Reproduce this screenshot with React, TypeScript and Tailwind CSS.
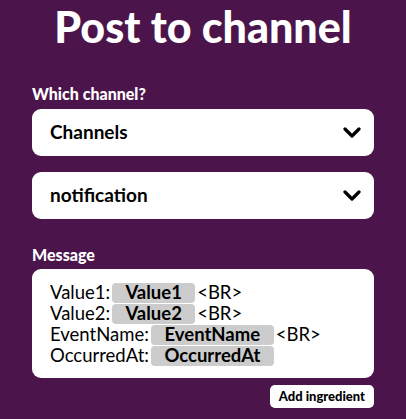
const font = { fontFamily: '"Lato", "Noto Sans", sans-serif' };

function Chevron() {
  return (
    <svg width="18" height="11" viewBox="0 0 18 11" className="shrink-0">
      <path d="M2 2l7 7 7-7" fill="none" stroke="#000" strokeWidth="3.2" strokeLinecap="round" strokeLinejoin="round" />
    </svg>
  );
}

function Select({ label }: { label: string }) {
  return (
    <div className="flex h-[47px] items-center justify-between rounded-[9px] bg-white pl-[18px] pr-[13px]">
      <span className="text-[19px] font-bold text-black">{label}</span>
      <Chevron />
    </div>
  );
}

function Pill({ children, w }: { children: string; w: string }) {
  return (
    <span className={`mx-[2px] inline-flex h-[20px] items-center justify-center rounded-[4px] bg-[#cccccc] font-bold ${w}`}>
      {children}
    </span>
  );
}

const lines = [
  { key: 'Value1', w: 'w-[83px]', br: true },
  { key: 'Value2', w: 'w-[83px]', br: true },
  { key: 'EventName', w: 'w-[123px]', br: true },
  { key: 'OccurredAt', w: 'w-[123px]', br: false },
];

export default function App() {
  return (
    <div className="h-[419px] w-[406px] overflow-hidden bg-[#4b154b] px-[32px] text-white" style={font}>
      <h1 className="pt-[1px] text-center text-[43px] font-black leading-[52px]">Post to channel</h1>

      <div className="mt-[33px] text-[16px] font-black leading-[16px]">Which channel?</div>
      <div className="mt-[7px] flex flex-col gap-[16px]">
        <Select label="Channels" />
        <Select label="notification" />
      </div>

      <div className="mt-[28px] text-[16px] font-black leading-[16px]">Message</div>
      <div className="mt-[6px] h-[109px] rounded-[9px] bg-white pl-[18px] pt-[13px] text-[18.5px] leading-[21px] text-black">
        {lines.map((l) => (
          <div key={l.key} className="flex items-center whitespace-nowrap">
            <span>{l.key}:</span>
            <Pill w={l.w}>{l.key}</Pill>
            {l.br && <span>&lt;BR&gt;</span>}
          </div>
        ))}
      </div>

      <div className="mt-[7px] flex justify-end">
        <button className="h-[23px] rounded-[5px] bg-white px-[9px] text-[13px] font-black text-black">Add ingredient</button>
      </div>
    </div>
  );
}
